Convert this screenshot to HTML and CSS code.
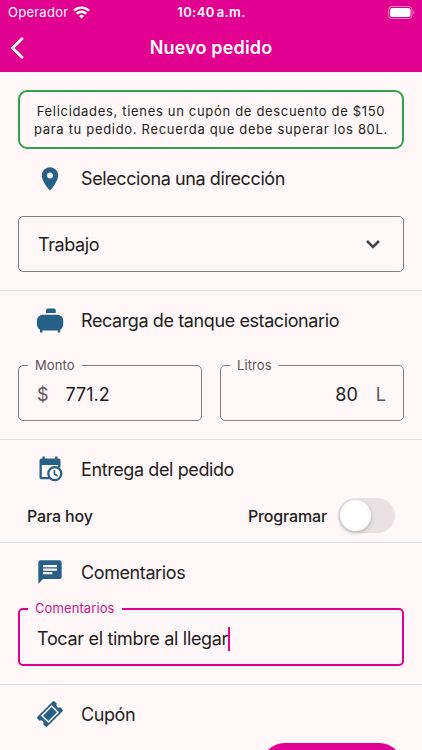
FILE: index.html
```
<!DOCTYPE html>
<html lang="es">
<head>
    <meta charset="UTF-8">
    <meta name="viewport" content="width=device-width, initial-scale=1">
    <title>Nuevo pedido</title>
    <link rel="stylesheet" href="styles.css">
</head>
<body>
    <header class="header">
        <div class="status-bar">
            <div class="carrier">
                <span>Operador</span>
                <svg class="wifi" viewBox="0 0 17 13" fill="none" stroke="#fff" stroke-width="2.4">
                    <path d="M1 4.7a10.6 10.6 0 0 1 15 0"/>
                    <path d="M3.7 7.7a6.8 6.8 0 0 1 9.6 0"/>
                    <path d="M8.5 12.5L6 10a3.6 3.6 0 0 1 5 0z" fill="#fff" stroke="none"/>
                </svg>
            </div>
            <div class="clock">10:40<span>a.m.</span></div>
            <svg class="battery" viewBox="0 0 27 13">
                <rect x=".5" y=".5" width="23.5" height="12" rx="3.4" fill="none" stroke="#fff" stroke-opacity=".5"/>
                <rect x="2" y="2" width="20.5" height="9" rx="2.2" fill="#fff"/>
                <path d="M25.3 4.5c1.6.7 1.6 3.3 0 4z" fill="#fff" fill-opacity=".5"/>
            </svg>
        </div>
        <div class="nav-bar">
            <svg class="back" viewBox="0 0 14 22" fill="none" stroke="#fff" stroke-width="2.8" stroke-linecap="round">
                <path d="M12 1.800L2.600 11l9.400 9.200"/>
            </svg>
            <h1 class="title">Nuevo pedido</h1>
        </div>
    </header>

    <main>
        <section class="section">
            <p class="notice">Felicidades, tienes un cupón de descuento de $150<br>para tu pedido. Recuerda que debe superar los 80L.</p>
            <div class="section-head">
                <svg class="icon" viewBox="0 0 24 24">
                    <path d="M12 2C8.130 2 5 5.130 5 9c0 5.250 7 13 7 13s7-7.750 7-13c0-3.870-3.130-7-7-7zm0 9.500a2.500 2.500 0 0 1 0-5 2.500 2.500 0 0 1 0 5z"/>
                </svg>
                <h2>Selecciona una dirección</h2>
            </div>
            <div class="select">
                <span>Trabajo</span>
                <svg class="chevron" viewBox="0 0 14 9" fill="none" stroke="#474043" stroke-width="2.5">
                    <path d="M1 1l6 6 6-6"/>
                </svg>
            </div>
        </section>

        <section class="section">
            <div class="section-head">
                <svg class="icon" viewBox="0 0 28 28">
                    <path d="M12 1.400h5.800a2 2 0 0 1 2 2V6H10V3.400a2 2 0 0 1 2-2z"/>
                    <rect x="1" y="7.800" width="26.200" height="15.600" rx="5.600"/>
                    <path d="M4 21h2.400v4.400H4zM21.800 21h2.400v4.400h-2.400z"/>
                </svg>
                <h2>Recarga de tanque estacionario</h2>
            </div>
            <div class="fields">
                <fieldset class="field">
                    <legend>Monto</legend>
                    <div class="field-row">
                        <span class="unit">$</span>
                        <span class="amount">771.2</span>
                    </div>
                </fieldset>
                <fieldset class="field">
                    <legend>Litros</legend>
                    <div class="field-row field-row-end">
                        <span class="liters">80</span>
                        <span class="unit">L</span>
                    </div>
                </fieldset>
            </div>
        </section>

        <section class="section section-delivery">
            <div class="section-head">
                <svg class="icon" viewBox="0 0 28 28">
                    <path fill-rule="evenodd" d="M6.500 1.500h2.300v2h10.400v-2h2.300v2h1a2 2 0 0 1 2 2v7h-2.300V10H5.800v12h7.700v2.300h-8a2 2 0 0 1-2-2V5.500a2 2 0 0 1 2-2h1z"/>
                    <circle cx="18.800" cy="18.600" r="6.500" fill="#fff7f8" stroke="#266087" stroke-width="2.300"/>
                    <path d="M18.400 14.900V19l3.200 2" fill="none" stroke="#266087" stroke-width="1.600"/>
                </svg>
                <h2>Entrega del pedido</h2>
            </div>
            <div class="schedule">
                <span>Para hoy</span>
                <span class="programar">Programar</span>
                <div class="switch"><div class="knob"></div></div>
            </div>
        </section>

        <section class="section section-comments">
            <div class="section-head">
                <svg class="icon" viewBox="0 0 24 24">
                    <path d="M20 2H4c-1.100 0-2 .9-2 2v18l4-4h14c1.100 0 2-.9 2-2V4c0-1.100-.9-2-2-2zM6 9h12v2H6V9zm8 5H6v-2h8v2zm4-6H6V6h12v2z"/>
                </svg>
                <h2>Comentarios</h2>
            </div>
            <fieldset class="field field-active">
                <legend>Comentarios</legend>
                <div class="field-row">
                    <span class="comment">Tocar el timbre al llegar</span><span class="caret"></span>
                </div>
            </fieldset>
        </section>

        <section class="section section-coupon">
            <div class="section-head">
                <svg class="icon" viewBox="0 0 28 28">
                    <g transform="rotate(-45 14 14)">
                        <path d="M3.500 7h21a1.600 1.600 0 0 1 1.600 1.600v2.800a2.700 2.700 0 0 0 0 5.200v2.800a1.600 1.600 0 0 1-1.600 1.600h-21a1.600 1.600 0 0 1-1.600-1.600v-2.800a2.700 2.700 0 0 0 0-5.200V8.600A1.600 1.600 0 0 1 3.500 7z"/>
                        <rect x="7.200" y="9.500" width="13.600" height="9" fill="none" stroke="#fff7f8" stroke-width="1.500"/>
                    </g>
                </svg>
                <h2>Cupón</h2>
            </div>
            <button class="submit" aria-label="Continuar"></button>
        </section>
    </main>
</body>
</html>
```
FILE: styles.css
```
* {
    box-sizing: border-box;
}
body {
    margin: 0;
    height: 750px;
    overflow: hidden;
    background: #fff7f8;
    color: #231d20;
    font-family: Inter, "Liberation Sans", sans-serif;
}
h1, h2, p {
    margin: 0;
}

/* header */
.header {
    height: 72px;
    background: #e1008f;
    color: #fff;
}
.status-bar {
    display: grid;
    grid-template-columns: 1fr auto 1fr;
    align-items: center;
    height: 24px;
    padding: 0 7px 0 8px;
    font-size: 13px;
}
.carrier {
    display: flex;
    align-items: center;
    gap: 5px;
    letter-spacing: 0.25px;
}
.wifi {
    width: 17px;
    height: 13px;
}
.clock {
    display: flex;
    gap: 2px;
    font-weight: 600;
    letter-spacing: 0.4px;
}
.battery {
    width: 27px;
    height: 13px;
    justify-self: end;
}
.nav-bar {
    display: grid;
    grid-template-columns: 14px 1fr 14px;
    align-items: center;
    height: 47px;
    padding: 0 10px;
}
.back {
    width: 14px;
    height: 22px;
}
.title {
    font-size: 18px;
    font-weight: 600;
    letter-spacing: 0.15px;
    text-align: center;
}

/* sections */
.section {
    padding: 0 18px 18px;
    border-bottom: 1px solid #e9dcdf;
}
.section-head {
    display: flex;
    align-items: center;
    gap: 17px;
    height: 59px;
    padding-left: 18px;
}
.section-head h2 {
    font-size: 18px;
    font-weight: 400;
    letter-spacing: -0.4px;
    white-space: nowrap;
}
.icon {
    width: 28px;
    height: 28px;
    fill: #266087;
}
.notice {
    height: 59px;
    margin-top: 18px;
    padding-top: 10px;
    border: 2px solid #34a04c;
    border-radius: 9px;
    font-size: 13px;
    line-height: 18px;
    letter-spacing: 0.68px;
    text-align: center;
    white-space: nowrap;
}
.select {
    display: flex;
    align-items: center;
    justify-content: space-between;
    height: 56px;
    margin-top: 8px;
    padding: 0 23px 0 19px;
    border: 1px solid #857d81;
    border-radius: 5px;
    font-size: 18px;
    letter-spacing: -0.4px;
}
.chevron {
    width: 14px;
    height: 9px;
}

/* outlined fields with the label on the border */
.fields {
    display: grid;
    grid-template-columns: 1fr 1fr;
    gap: 18px;
    margin-top: 8px;
}
.field {
    min-width: 0;
    height: 63px;
    margin: 0;
    padding: 0 17px 0 9px;
    border: 1px solid #857d81;
    border-radius: 5px;
    font-size: 18px;
}
.field legend {
    padding: 0 7px;
    color: #5d5559;
    font-size: 13px;
    line-height: 15px;
    letter-spacing: 0.1px;
}
.field-row {
    display: flex;
    align-items: center;
    height: 43px;
    padding-left: 9px;
}
.field-row-end {
    justify-content: flex-end;
}
.unit {
    color: #5d5559;
}
.amount {
    margin-left: 17px;
}
.liters {
    margin-right: 18px;
}

/* delivery */
.section-delivery {
    padding-bottom: 9px;
}
.section-delivery .section-head,
.section-comments .section-head,
.section-coupon .section-head {
    height: 58px;
}
.schedule {
    display: flex;
    align-items: center;
    height: 35px;
    padding: 0 9px;
    font-size: 16px;
    font-weight: 500;
    letter-spacing: -0.15px;
}
.programar {
    margin: 0 11px 0 auto;
}
.switch {
    width: 57px;
    height: 35px;
    padding: 2px;
    border-radius: 18px;
    background: #e8e2e4;
}
.knob {
    width: 31px;
    height: 31px;
    border-radius: 50%;
    background: #fff;
    box-shadow: 0 2px 5px rgba(0, 0, 0, 0.2);
}

/* comments */
.field-active {
    height: 65px;
    padding-left: 8px;
    border: 2px solid #e1008f;
}
.field-active legend {
    padding: 0 7px;
    color: #d4148f;
    line-height: 14px;
    padding-bottom: 2px;
}
.comment {
    letter-spacing: -0.32px;
}
.caret {
    width: 2px;
    height: 24px;
    background: #e1008f;
}

/* coupon */
.section-coupon {
    display: flex;
    flex-direction: column;
    border: 0;
}
.submit {
    align-self: flex-end;
    width: 140px;
    height: 45px;
    margin-right: 2px;
    border: 0;
    border-radius: 23px;
    background: #e1008f;
}
```
